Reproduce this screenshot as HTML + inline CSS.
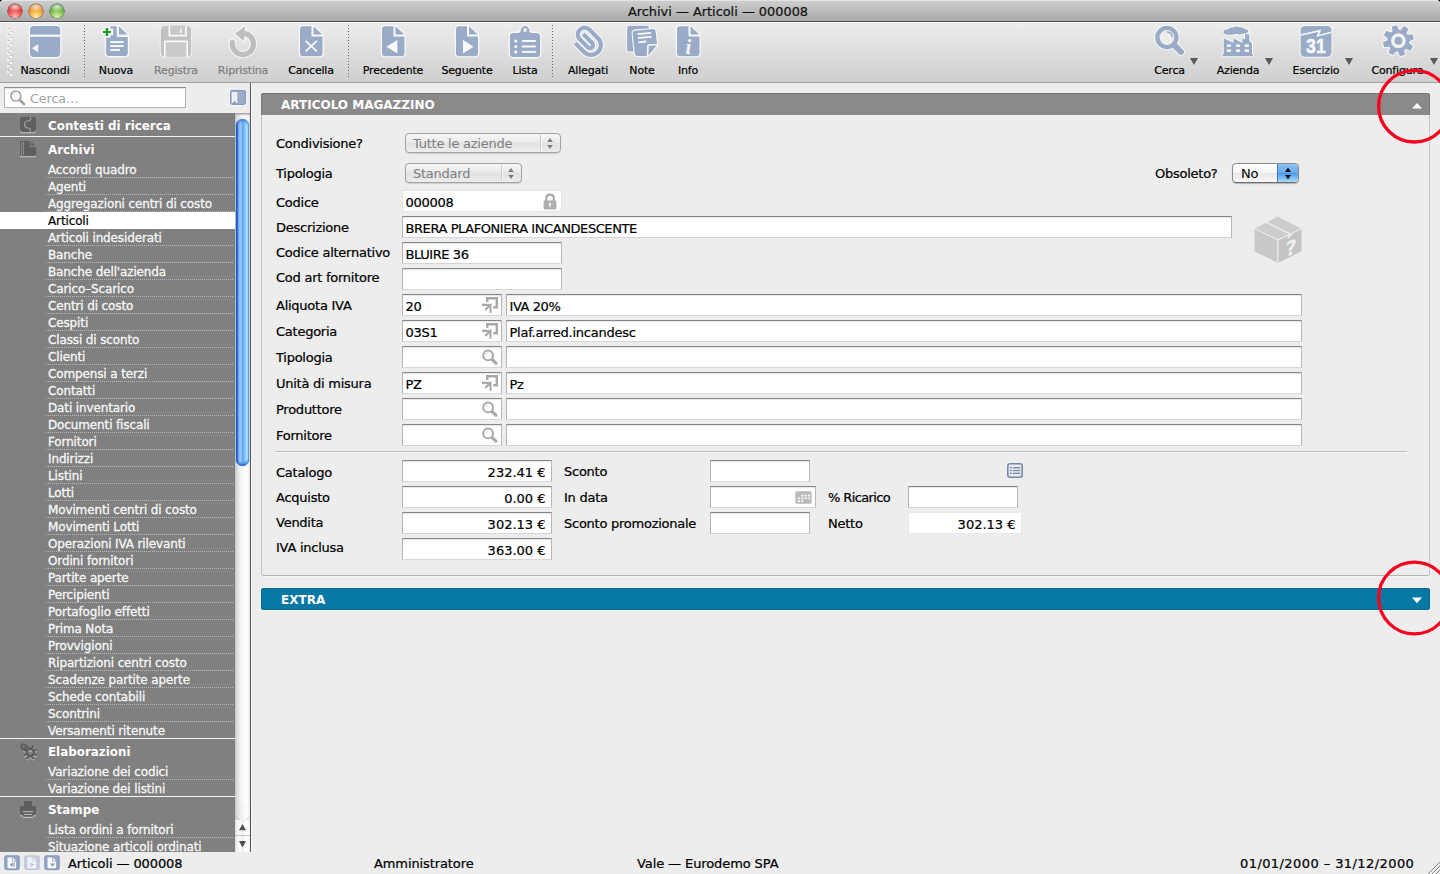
<!DOCTYPE html>
<html lang="it"><head><meta charset="utf-8"><title>Archivi — Articoli — 000008</title>
<style>
html,body{margin:0;padding:0;}
body{width:1440px;height:874px;overflow:hidden;background:#1a1a1a;font-family:"DejaVu Sans","Liberation Sans",sans-serif;color:#000;}
#win{position:relative;width:1440px;height:874px;overflow:hidden;background:#ededed;border-radius:4px 4px 0 0;}
#win *{box-sizing:border-box;}
.abs{position:absolute;}
/* title bar */
#title{position:absolute;left:0;top:0;width:1440px;height:22px;background:linear-gradient(#d0d0d0,#bebebe 45%,#a9a9a9);border-bottom:1px solid #515151;box-shadow:inset 0 1px 0 #e4e4e4;border-radius:4px 4px 0 0;}
#title .tt{-webkit-text-stroke:.22px #111;position:absolute;left:0;width:1436px;top:4px;text-align:center;font-size:12.9px;line-height:16px;color:#111;}
.tl{position:absolute;top:4px;width:14px;height:14px;border-radius:7px;}
/* toolbar */
#tb{position:absolute;left:0;top:22px;width:1440px;height:61px;background:linear-gradient(#ececec,#dedede 50%,#cfcfcf);border-bottom:1px solid #a3a3a3;box-shadow:inset 0 1px 0 #fbfbfb;}
.tbi{position:absolute;top:0;height:60px;width:80px;margin-left:-40px;text-align:center;}
.tbi svg{position:absolute;left:50%;top:2px;margin-left:-18px;}
.tbi .lb{-webkit-text-stroke:.2px currentColor;position:absolute;left:0;width:80px;top:42px;font-size:11px;letter-spacing:-.18px;line-height:14px;color:#000;white-space:nowrap;}
.tbi.dis .lb{color:#7d7d7d;}
.vsep{position:absolute;top:3px;height:54px;width:1px;background:repeating-linear-gradient(to bottom,#6e6e6e 0,#6e6e6e 1px,transparent 1px,transparent 3px);}
.dd{position:absolute;top:36px;width:0;height:0;border-left:4px solid transparent;border-right:4px solid transparent;border-top:7px solid #5a5a5a;}
/* sidebar */
#side{position:absolute;left:0;top:83px;width:251px;height:769px;background:#ededed;border-right:1px solid #565656;box-shadow:1px 0 0 #f7f7f7;}
#srch{position:absolute;left:4px;top:4px;width:182px;height:21px;background:#fff;border:1px solid #b5b5b5;border-top-color:#8c8c8c;box-shadow:inset 0 1px 1px rgba(0,0,0,.12);}
#srch .ph{position:absolute;left:25px;top:3px;font-size:12.6px;line-height:16px;color:#a3a3a3;}
#list{position:absolute;left:0;top:30px;width:236px;height:740px;background:#808080;overflow:hidden;}
.hdr{position:absolute;left:0;width:236px;}
.hdr .ht{position:absolute;left:48px;font-size:11.9px;font-weight:bold;line-height:16px;color:#fff;white-space:nowrap;}
.hdr .hic{position:absolute;left:20px;top:4px;width:18px;height:18px;}
.wl{position:absolute;left:0;width:236px;height:1px;background:#f4f4f4;}
.it{position:absolute;left:0;width:236px;height:17px;}
.it span{position:absolute;left:48px;top:1px;font-size:12px;letter-spacing:-.13px;line-height:16px;color:#f7f7f7;-webkit-text-stroke:.3px #f7f7f7;white-space:nowrap;}
.it:after{content:"";position:absolute;left:46px;width:188px;bottom:0;height:1px;background:repeating-linear-gradient(to right,#b9b9b9 0,#b9b9b9 1px,transparent 1px,transparent 2px);}
.it.nl:after{display:none;}
.it.sel{background:#fff;}
.it.sel span{color:#000;-webkit-text-stroke:.2px #000;}
/* main */
.phead{position:absolute;left:261px;width:1169px;height:23px;border-radius:3px 3px 0 0;}
.phead .t{position:absolute;left:20px;top:5px;font-size:12px;font-weight:bold;line-height:15px;color:#fff;white-space:nowrap;}
.lbl{position:absolute;-webkit-text-stroke:.22px #000;font-size:13px;letter-spacing:-.25px;line-height:16px;white-space:nowrap;color:#000;}
.fld{position:absolute;height:22px;background:#fff;border:1px solid #d6d6d6;border-top:1px solid #868686;border-left-color:#b2b2b2;border-right-color:#b8b8b8;box-shadow:inset 0 1px 1px rgba(0,0,0,.10);font-size:13px;letter-spacing:-.25px;line-height:16px;white-space:nowrap;}
.fld span{-webkit-text-stroke:.2px #000;}
.fld .uc{letter-spacing:-.42px;}
.fld .v{position:absolute;left:2.5px;top:4px;}
.fld .r{position:absolute;right:5.5px;top:4px;letter-spacing:0;}
.fld.nb{border-color:#fff;}
.pop{position:absolute;height:20px;border:1px solid #a3a3a3;border-radius:4px;background:linear-gradient(#f6f6f6,#e9e9e9 50%,#e2e2e2 51%,#ececec);font-size:13px;letter-spacing:-.25px;line-height:16px;color:#7e7e7e;box-shadow:0 1px 1px rgba(0,0,0,.13);}
.pop .v{position:absolute;left:7px;top:2px;white-space:nowrap;}
/* status */
#status{position:absolute;left:0;top:852px;width:1440px;height:22px;background:#ededed;}
#status .s{-webkit-text-stroke:.22px #000;position:absolute;top:4px;font-size:13px;letter-spacing:-.1px;line-height:16px;white-space:nowrap;color:#000;}

</style></head>
<body>
<div id="win">
<div id="title">
<div class="tl" style="left:8px;background:radial-gradient(ellipse 58% 34% at 50% 20%,rgba(255,255,255,.8),rgba(255,255,255,0) 100%),radial-gradient(circle at 50% 92%,#ffc4c0 0,#f4605c 38%,#cf2a25 72%,#8e1a17 100%);box-shadow:0 0 0 .6px #6b2320,0 1px 0 rgba(255,255,255,.35);"></div>
<div class="tl" style="left:29px;background:radial-gradient(ellipse 58% 34% at 50% 20%,rgba(255,255,255,.8),rgba(255,255,255,0) 100%),radial-gradient(circle at 50% 92%,#fff0a8 0,#f8b848 38%,#dd7f22 72%,#9a5413 100%);box-shadow:0 0 0 .6px #7a4c18,0 1px 0 rgba(255,255,255,.35);"></div>
<div class="tl" style="left:50px;background:radial-gradient(ellipse 58% 34% at 50% 20%,rgba(255,255,255,.8),rgba(255,255,255,0) 100%),radial-gradient(circle at 50% 92%,#dcf5ac 0,#92cc5e 38%,#509d35 72%,#2f6a1f 100%);box-shadow:0 0 0 .6px #2f5a20,0 1px 0 rgba(255,255,255,.35);"></div>
<div class="tt">Archivi — Articoli — 000008</div>
</div>
<div id="tb">
<svg class="abs" style="left:6px;top:6px" width="8" height="48" viewBox="0 0 8 48"><rect x="2" y="0" width="1.4" height="1.4" fill="#bdbdbd"/><rect x="1" y="1" width="2" height="2" fill="#f8f8f8"/><rect x="5" y="3" width="1.4" height="1.4" fill="#bdbdbd"/><rect x="4" y="4" width="2" height="2" fill="#f8f8f8"/><rect x="2" y="6" width="1.4" height="1.4" fill="#bdbdbd"/><rect x="1" y="7" width="2" height="2" fill="#f8f8f8"/><rect x="5" y="9" width="1.4" height="1.4" fill="#bdbdbd"/><rect x="4" y="10" width="2" height="2" fill="#f8f8f8"/><rect x="2" y="12" width="1.4" height="1.4" fill="#bdbdbd"/><rect x="1" y="13" width="2" height="2" fill="#f8f8f8"/><rect x="5" y="15" width="1.4" height="1.4" fill="#bdbdbd"/><rect x="4" y="16" width="2" height="2" fill="#f8f8f8"/><rect x="2" y="18" width="1.4" height="1.4" fill="#bdbdbd"/><rect x="1" y="19" width="2" height="2" fill="#f8f8f8"/><rect x="5" y="21" width="1.4" height="1.4" fill="#bdbdbd"/><rect x="4" y="22" width="2" height="2" fill="#f8f8f8"/><rect x="2" y="24" width="1.4" height="1.4" fill="#bdbdbd"/><rect x="1" y="25" width="2" height="2" fill="#f8f8f8"/><rect x="5" y="27" width="1.4" height="1.4" fill="#bdbdbd"/><rect x="4" y="28" width="2" height="2" fill="#f8f8f8"/><rect x="2" y="30" width="1.4" height="1.4" fill="#bdbdbd"/><rect x="1" y="31" width="2" height="2" fill="#f8f8f8"/><rect x="5" y="33" width="1.4" height="1.4" fill="#bdbdbd"/><rect x="4" y="34" width="2" height="2" fill="#f8f8f8"/><rect x="2" y="36" width="1.4" height="1.4" fill="#bdbdbd"/><rect x="1" y="37" width="2" height="2" fill="#f8f8f8"/><rect x="5" y="39" width="1.4" height="1.4" fill="#bdbdbd"/><rect x="4" y="40" width="2" height="2" fill="#f8f8f8"/><rect x="2" y="42" width="1.4" height="1.4" fill="#bdbdbd"/><rect x="1" y="43" width="2" height="2" fill="#f8f8f8"/><rect x="5" y="45" width="1.4" height="1.4" fill="#bdbdbd"/><rect x="4" y="46" width="2" height="2" fill="#f8f8f8"/></svg>
<div class="tbi" style="left:45px"><svg width="36" height="36" viewBox="0 0 36 36"><g fill="#f8f8f8" stroke="#f8f8f8" stroke-width="2.8" stroke-linejoin="round"><rect x="3" y="2" width="30.2" height="31" rx="4"/></g><g fill="#9aabc8"><rect x="3" y="2" width="30.2" height="31" rx="4"/></g><rect x="3" y="10.6" width="30.2" height="2.2" fill="#f8f8f8"/><path d="M5 24.2L11.2 20.2V28.2Z" fill="#f8f8f8"/></svg><div class="lb">Nascondi</div></div>
<div class="vsep" style="left:84px"></div>
<div class="tbi" style="left:116px"><svg width="36" height="36" viewBox="0 0 36 36"><g fill="#f8f8f8" stroke="#f8f8f8" stroke-width="2.6" stroke-linejoin="round"><path d="M12.2 2.3H18.8V12.9H29.8V29Q29.8 32.1 26.7 32.1H11.2Q8.1 32.1 8.1 29V13.8H12.6V11.3H15.2V4.4H12.2Z"/><path d="M20.9 2.3L29.7 10.5H20.9Z"/><path d="M7.8 3.9H10.1V6.9H12.9V9.1H10.1V12H7.8V9.1H4.9V6.9H7.8Z"/></g><g fill="#9aabc8"><path d="M12.2 2.3H18.8V12.9H29.8V29Q29.8 32.1 26.7 32.1H11.2Q8.1 32.1 8.1 29V13.8H12.6V11.3H15.2V4.4H12.2Z"/><path d="M20.9 2.3L29.7 10.5H20.9Z"/></g><g fill="#12a016"><path d="M7.8 3.9H10.1V6.9H12.9V9.1H10.1V12H7.8V9.1H4.9V6.9H7.8Z"/></g><g fill="#f8f8f8"><rect x="12.2" y="17.1" width="13.5" height="1.9"/><rect x="12.2" y="21.1" width="13.5" height="1.9"/><rect x="12.2" y="25.1" width="9.6" height="1.9"/></g></svg><div class="lb">Nuova</div></div>
<div class="tbi dis" style="left:176px"><svg width="36" height="36" viewBox="0 0 36 36"><g fill="#f8f8f8" stroke="#f8f8f8" stroke-width="1.8" stroke-linejoin="round"><rect x="2.7" y="1.8" width="30.5" height="31.2" rx="4.4"/></g><g fill="#c2c2c2"><rect x="2.7" y="1.8" width="30.5" height="31.2" rx="4.4"/></g><path d="M11.4 1.6V11.7H28V1.6" fill="#c8c8c8" stroke="#f8f8f8" stroke-width="1.7"/><rect x="22" y="4.6" width="1.6" height="4.6" rx=".8" fill="#f8f8f8"/><path d="M6.8 33.4V17.4H29.2V33.4" fill="#cbcbcb" stroke="#f8f8f8" stroke-width="1.7"/></svg><div class="lb">Registra</div></div>
<div class="tbi dis" style="left:243px"><svg width="36" height="36" viewBox="0 0 36 36"><g fill="none"><path d="M7.4 18.4A10.6 10.6 0 1 0 18.6 9.4" stroke="#f8f8f8" stroke-width="7.4" stroke-linecap="round"/></g><path d="M20.4 2L9.6 9.5L19 17.6Z" fill="#f8f8f8" stroke="#f8f8f8" stroke-width="2" stroke-linejoin="round"/><path d="M7.4 18.4A10.6 10.6 0 1 0 18.6 9.4" fill="none" stroke="#bebebe" stroke-width="5.4" stroke-linecap="round"/><path d="M20.2 2.3L10 9.5L18.8 17.2Z" fill="#bebebe"/></svg><div class="lb">Ripristina</div></div>
<div class="tbi" style="left:311px"><svg width="36" height="36" viewBox="0 0 36 36"><g fill="#f8f8f8" stroke="#f8f8f8" stroke-width="2.6" stroke-linejoin="round"><path d="M7 5.3Q7 2.2 10.1 2.2H18.5V12.6H29.5V29Q29.5 32.2 26.4 32.2H10.1Q7 32.2 7 29Z"/><path d="M20.5 2.3L29.3 10.6H20.5Z"/></g><g fill="#9aabc8"><path d="M7 5.3Q7 2.2 10.1 2.2H18.5V12.6H29.5V29Q29.5 32.2 26.4 32.2H10.1Q7 32.2 7 29Z"/><path d="M20.5 2.3L29.3 10.6H20.5Z"/></g><path d="M12.6 16.8L23.9 27.4M23.9 16.8L12.6 27.4" stroke="#f8f8f8" stroke-width="1.8" fill="none"/></svg><div class="lb">Cancella</div></div>
<div class="vsep" style="left:348px"></div>
<div class="tbi" style="left:393px"><svg width="36" height="36" viewBox="0 0 36 36"><g fill="#f8f8f8" stroke="#f8f8f8" stroke-width="2.6" stroke-linejoin="round"><path d="M7 5.3Q7 2.2 10.1 2.2H18.5V12.6H29.5V29Q29.5 32.2 26.4 32.2H10.1Q7 32.2 7 29Z"/><path d="M20.5 2.3L29.3 10.6H20.5Z"/></g><g fill="#9aabc8"><path d="M7 5.3Q7 2.2 10.1 2.2H18.5V12.6H29.5V29Q29.5 32.2 26.4 32.2H10.1Q7 32.2 7 29Z"/><path d="M20.5 2.3L29.3 10.6H20.5Z"/></g><path d="M11.4 22.7L22.4 16V29.4Z" fill="#f8f8f8"/></svg><div class="lb">Precedente</div></div>
<div class="tbi" style="left:467px"><svg width="36" height="36" viewBox="0 0 36 36"><g fill="#f8f8f8" stroke="#f8f8f8" stroke-width="2.6" stroke-linejoin="round"><path d="M7 5.3Q7 2.2 10.1 2.2H18V12.6H29V29Q29 32.2 25.9 32.2H10.1Q7 32.2 7 29Z"/><path d="M20 2.3L28.8 10.6H20Z"/></g><g fill="#9aabc8"><path d="M7 5.3Q7 2.2 10.1 2.2H18V12.6H29V29Q29 32.2 25.9 32.2H10.1Q7 32.2 7 29Z"/><path d="M20 2.3L28.8 10.6H20Z"/></g><path d="M24.6 22.7L14 16V29.4Z" fill="#f8f8f8"/></svg><div class="lb">Seguente</div></div>
<div class="tbi" style="left:525px"><svg width="36" height="36" viewBox="0 0 36 36"><g fill="#f8f8f8" stroke="#f8f8f8" stroke-width="2.8" stroke-linejoin="round"><rect x="2.9" y="8.9" width="30.2" height="24.1" rx="3.6"/><circle cx="18" cy="6.6" r="4.5"/><path d="M10.4 12L12.4 8.2H23.6L25.6 12Z"/></g><g fill="#9aabc8"><rect x="2.9" y="8.9" width="30.2" height="24.1" rx="3.6"/><circle cx="18" cy="6.6" r="4.5"/><path d="M10.4 12L12.4 8.2H23.6L25.6 12Z"/></g><circle cx="18" cy="6" r="1.9" fill="#f0f0f0"/><g fill="#f8f8f8"><circle cx="8.8" cy="17" r="1.6"/><circle cx="8.8" cy="22.5" r="1.6"/><circle cx="8.8" cy="27.9" r="1.6"/><rect x="14.8" y="16" width="14" height="2"/><rect x="14.8" y="21.5" width="14" height="2"/><rect x="14.8" y="26.9" width="14" height="2"/></g></svg><div class="lb">Lista</div></div>
<div class="vsep" style="left:552px"></div>
<div class="tbi" style="left:588px"><svg width="36" height="36" viewBox="0 0 36 36"><path d="M5.29 19.11L14.20 28.02A9.75 9.75 0 0 0 27.99 14.23L19.29 5.54A6.80 6.80 0 0 0 9.67 15.15L17.80 23.28A3.05 3.05 0 0 0 22.12 18.97L13.28 10.13" fill="none" stroke="#f8f8f8" stroke-width="6.2" stroke-linecap="butt" stroke-linejoin="round"/><path d="M5.29 19.11L14.20 28.02A9.75 9.75 0 0 0 27.99 14.23L19.29 5.54A6.80 6.80 0 0 0 9.67 15.15L17.80 23.28A3.05 3.05 0 0 0 22.12 18.97L13.28 10.13" fill="none" stroke="#9aabc8" stroke-width="4.2" stroke-linecap="butt" stroke-linejoin="round"/></svg><div class="lb">Allegati</div></div>
<div class="tbi" style="left:642px"><svg width="36" height="36" viewBox="0 0 36 36"><g fill="#f8f8f8" stroke="#f8f8f8" stroke-width="1.8" stroke-linejoin="round"><path d="M5.6 1.8H22.5Q25 1.8 25 4.4V27.5H5.6Q3.1 27.5 3.1 25V4.4Q3.1 1.8 5.6 1.8Z"/></g><g fill="#9aabc8"><path d="M5.6 1.8H22.5Q25 1.8 25 4.4V27.5H5.6Q3.1 27.5 3.1 25V4.4Q3.1 1.8 5.6 1.8Z"/></g><g fill="#f8f8f8" stroke="#f8f8f8" stroke-width="2.2" stroke-linejoin="round"><path d="M8.7 9.4Q8.5 7 11 6.7L29 5Q31.4 4.8 31.6 7.2L33.2 21L23.7 32.2L13.2 32Q10.9 32 10.7 29.6Z"/></g><g fill="#9aabc8"><path d="M8.7 9.4Q8.5 7 11 6.7L29 5Q31.4 4.8 31.6 7.2L33.2 21L23.7 32.2L13.2 32Q10.9 32 10.7 29.6Z"/></g><path d="M23.6 32.6L23.9 22.8Q24 20.6 26.2 20.7L33.6 21" fill="none" stroke="#f8f8f8" stroke-width="1.6" stroke-linejoin="round"/><g stroke="#f8f8f8" stroke-width="1.8" fill="none"><path d="M13.4 10.1L27 8.9M14 13.9L27.6 12.8M14.3 18.4L22.3 17.5"/></g></svg><div class="lb">Note</div></div>
<div class="tbi" style="left:688px"><svg width="36" height="36" viewBox="0 0 36 36"><g fill="#f8f8f8" stroke="#f8f8f8" stroke-width="2.6" stroke-linejoin="round"><path d="M7 5.3Q7 2.2 10.1 2.2H18.5V12.6H29.5V29Q29.5 32.2 26.4 32.2H10.1Q7 32.2 7 29Z"/><path d="M20.5 2.3L29.3 10.6H20.5Z"/></g><g fill="#9aabc8"><path d="M7 5.3Q7 2.2 10.1 2.2H18.5V12.6H29.5V29Q29.5 32.2 26.4 32.2H10.1Q7 32.2 7 29Z"/><path d="M20.5 2.3L29.3 10.6H20.5Z"/></g><text x="18.4" y="29.6" text-anchor="middle" font-family="Liberation Serif,DejaVu Serif,serif" font-style="italic" font-weight="bold" font-size="21" fill="#f8f8f8">i</text></svg><div class="lb">Info</div></div>
<div class="tbi" style="left:1169.5px"><svg width="36" height="36" viewBox="0 0 36 36"><g fill="none"><path d="M22.6 21.6L29 27.8" stroke="#f8f8f8" stroke-width="8" stroke-linecap="round"/><circle cx="14.9" cy="13.5" r="9.55" stroke="#f8f8f8" stroke-width="6.3"/><path d="M22.2 21.2L29 27.8" stroke="#9aabc8" stroke-width="6" stroke-linecap="round"/><circle cx="14.9" cy="13.5" r="9.55" stroke="#9aabc8" stroke-width="4.3" fill="#ececec"/><path d="M15.4 8A5.4 5.4 0 0 1 20.3 12.8" stroke="#9aabc8" stroke-width="1.4" stroke-linecap="round"/></g></svg><div class="lb">Cerca</div></div>
<div class="dd" style="left:1190px"></div>
<div class="tbi" style="left:1238px"><svg width="36" height="36" viewBox="0 0 36 36"><g fill="#f8f8f8" stroke="#f8f8f8" stroke-width="2" stroke-linejoin="round"><path d="M6.6 10.4Q2.8 10.2 3.3 7.6Q4 5.2 7.6 5.6Q9.4 2.9 13 3.6Q16 1.4 19.6 3.3Q23.6 2.6 24.6 4.9Q28.4 4.9 28.1 7.8Q27.4 10 23 9.6Q19.6 11.2 16.4 9.8Q11.6 11.4 6.6 10.4Z"/><path d="M3.7 30.5V14.2L13.5 19V14.2L22.3 19V14.2L25 15.6V10.2H29.3V16.4L32 19.4V30.5Z"/><rect x="2.6" y="30" width="30.4" height="2.2"/></g><g fill="#9aabc8"><path d="M6.6 10.4Q2.8 10.2 3.3 7.6Q4 5.2 7.6 5.6Q9.4 2.9 13 3.6Q16 1.4 19.6 3.3Q23.6 2.6 24.6 4.9Q28.4 4.9 28.1 7.8Q27.4 10 23 9.6Q19.6 11.2 16.4 9.8Q11.6 11.4 6.6 10.4Z"/><path d="M3.7 30.5V14.2L13.5 19V14.2L22.3 19V14.2L25 15.6V10.2H29.3V16.4L32 19.4V30.5Z"/><rect x="2.6" y="30" width="30.4" height="2.2"/></g><g fill="#f8f8f8"><rect x="6.8" y="20.4" width="4.2" height="2.5"/><rect x="15.9" y="20.4" width="4.2" height="2.5"/><rect x="24.7" y="20.4" width="4.2" height="2.5"/><rect x="6.8" y="25.4" width="4.2" height="2.5"/><rect x="15.9" y="25.4" width="4.2" height="2.5"/><rect x="24.7" y="25.4" width="4.2" height="2.5"/></g></svg><div class="lb">Azienda</div></div>
<div class="dd" style="left:1265px"></div>
<div class="tbi" style="left:1316px"><svg width="36" height="36" viewBox="0 0 36 36"><g fill="#f8f8f8" stroke="#f8f8f8" stroke-width="2" stroke-linejoin="round"><rect x="2.6" y="1.9" width="30.9" height="30.8" rx="4.2"/></g><g fill="#9aabc8"><rect x="2.6" y="1.9" width="30.9" height="30.8" rx="4.2"/></g><path d="M2.6 11L22 6.7L19.6 11.9L33.5 8.2" fill="none" stroke="#f8f8f8" stroke-width="1.6" stroke-linejoin="miter"/><text transform="translate(17.9 29.3) scale(.86 1)" text-anchor="middle" font-family="Liberation Sans,DejaVu Sans,sans-serif" font-weight="bold" font-size="20.6" fill="#f8f8f8" stroke="#f8f8f8" stroke-width=".5">31</text></svg><div class="lb">Esercizio</div></div>
<div class="dd" style="left:1345px"></div>
<div class="tbi" style="left:1397.5px"><svg width="36" height="36" viewBox="0 0 36 36"><g transform="translate(18.4 16.7)"><g fill="#f8f8f8" stroke="#f8f8f8" stroke-width="2" stroke-linejoin="round"><circle r="10.9"/><path d="M-3.4 -10L-2.6 -15.4H2.6L3.4 -10Z" transform="rotate(-15)"/><path d="M-3.4 -10L-2.6 -15.4H2.6L3.4 -10Z" transform="rotate(30)"/><path d="M-3.4 -10L-2.6 -15.4H2.6L3.4 -10Z" transform="rotate(75)"/><path d="M-3.4 -10L-2.6 -15.4H2.6L3.4 -10Z" transform="rotate(120)"/><path d="M-3.4 -10L-2.6 -15.4H2.6L3.4 -10Z" transform="rotate(165)"/><path d="M-3.4 -10L-2.6 -15.4H2.6L3.4 -10Z" transform="rotate(210)"/><path d="M-3.4 -10L-2.6 -15.4H2.6L3.4 -10Z" transform="rotate(255)"/><path d="M-3.4 -10L-2.6 -15.4H2.6L3.4 -10Z" transform="rotate(300)"/></g><g fill="#9aabc8"><circle r="10.9"/><path d="M-3.4 -10L-2.6 -15.4H2.6L3.4 -10Z" transform="rotate(-15)"/><path d="M-3.4 -10L-2.6 -15.4H2.6L3.4 -10Z" transform="rotate(30)"/><path d="M-3.4 -10L-2.6 -15.4H2.6L3.4 -10Z" transform="rotate(75)"/><path d="M-3.4 -10L-2.6 -15.4H2.6L3.4 -10Z" transform="rotate(120)"/><path d="M-3.4 -10L-2.6 -15.4H2.6L3.4 -10Z" transform="rotate(165)"/><path d="M-3.4 -10L-2.6 -15.4H2.6L3.4 -10Z" transform="rotate(210)"/><path d="M-3.4 -10L-2.6 -15.4H2.6L3.4 -10Z" transform="rotate(255)"/><path d="M-3.4 -10L-2.6 -15.4H2.6L3.4 -10Z" transform="rotate(300)"/></g><circle r="7.4" fill="#f3f3f3"/><circle r="3.9" fill="#9aabc8"/></g></svg><div class="lb">Configura</div></div>
<div class="dd" style="left:1430px"></div>
</div>
<div id="side">
<div id="srch"><svg class="abs" style="left:4px;top:1px" width="18" height="18" viewBox="0 0 18 18"><g fill="none" stroke-linecap="round"><path d="M10.4 10.6L15 15.2" stroke="#9b9b9b" stroke-width="2.6"/><circle cx="6.8" cy="7" r="5" stroke="#a6a6a6" stroke-width="1.7" fill="#fdfdfd"/><path d="M4 6Q4.6 4 6.8 3.8" stroke="#dcdcdc" stroke-width="1.2"/></g></svg><span class="ph">Cerca…</span></div>
<svg class="abs" style="left:229px;top:6px" width="18" height="18" viewBox="0 0 18 18"><rect x=".6" y="1.6" width="16.8" height="15.4" rx="2.8" fill="#fafafa"/><rect x="1" y=".9" width="16" height="15.1" rx="2.4" fill="#8496ba"/><rect x="2.1" y="1.9" width="13.8" height="13.1" rx="1.4" fill="#9aacca"/><rect x="2.1" y="1.9" width="6.6" height="13.1" fill="#8a9cbe"/><path d="M3 3.2H8V14.2L5.5 11.7L3 14.2Z" fill="#eeeeee" stroke="#fbfbfb" stroke-width=".7"/></svg>
<div id="list">
<div class="hdr" style="top:0;height:23px"><span class="hic"><svg width="18" height="18" viewBox="0 0 18 18"><path d="M0 11V13.6Q0 16.3 2.6 16.3H13.4Q16 16.3 16 13.6V11Z" fill="#cfcfcf"/><rect x="0" y="0" width="16" height="15.2" rx="2.6" fill="#5f5f5f"/><path d="M10.8 0.3Q11 3.2 9.6 3.8Q5 3.4 4.6 6.6Q4.4 10.2 6.6 11Q10.2 10.6 10.2 12.6L10 15" fill="none" stroke="#a0a0a0" stroke-width="1.2"/></svg>
</span><span class="ht" style="top:5px">Contesti di ricerca</span></div>
<div class="wl" style="top:23px"></div>
<div class="hdr" style="top:24px;height:24px"><span class="hic"><svg width="18" height="18" viewBox="0 0 18 18"><path d="M0 12V14.8Q0 16.3 1.5 16.3H14.5Q16 16.3 16 14.8V12Z" fill="#cfcfcf"/><path d="M1.2 0H10.2V5.8H16V13.8Q16 15.2 14.6 15.2H1.2Q0 15.2 0 13.8V1.2Q0 0 1.2 0Z" fill="#5f5f5f"/><path d="M10.9 .3L15.7 5.1H10.9Z" fill="#646464"/><path d="M10.55 0V5.45H16" fill="none" stroke="#8e8e8e" stroke-width=".7"/><path d="M1.6 .8V14.4M3.6 .8V14.4" stroke="#a2a2a2" stroke-width=".75" fill="none"/></svg>
</span><span class="ht" style="top:5px">Archivi</span></div>
<div class="it" style="top:48px"><span>Accordi quadro</span></div>
<div class="it" style="top:65px"><span>Agenti</span></div>
<div class="it" style="top:82px"><span>Aggregazioni centri di costo</span></div>
<div class="it sel nl" style="top:99px"><span>Articoli</span></div>
<div class="it" style="top:116px"><span>Articoli indesiderati</span></div>
<div class="it" style="top:133px"><span>Banche</span></div>
<div class="it" style="top:150px"><span>Banche dell'azienda</span></div>
<div class="it" style="top:167px"><span>Carico–Scarico</span></div>
<div class="it" style="top:184px"><span>Centri di costo</span></div>
<div class="it" style="top:201px"><span>Cespiti</span></div>
<div class="it" style="top:218px"><span>Classi di sconto</span></div>
<div class="it" style="top:235px"><span>Clienti</span></div>
<div class="it" style="top:252px"><span>Compensi a terzi</span></div>
<div class="it" style="top:269px"><span>Contatti</span></div>
<div class="it" style="top:286px"><span>Dati inventario</span></div>
<div class="it" style="top:303px"><span>Documenti fiscali</span></div>
<div class="it" style="top:320px"><span>Fornitori</span></div>
<div class="it" style="top:337px"><span>Indirizzi</span></div>
<div class="it" style="top:354px"><span>Listini</span></div>
<div class="it" style="top:371px"><span>Lotti</span></div>
<div class="it" style="top:388px"><span>Movimenti centri di costo</span></div>
<div class="it" style="top:405px"><span>Movimenti Lotti</span></div>
<div class="it" style="top:422px"><span>Operazioni IVA rilevanti</span></div>
<div class="it" style="top:439px"><span>Ordini fornitori</span></div>
<div class="it" style="top:456px"><span>Partite aperte</span></div>
<div class="it" style="top:473px"><span>Percipienti</span></div>
<div class="it" style="top:490px"><span>Portafoglio effetti</span></div>
<div class="it" style="top:507px"><span>Prima Nota</span></div>
<div class="it" style="top:524px"><span>Provvigioni</span></div>
<div class="it" style="top:541px"><span>Ripartizioni centri costo</span></div>
<div class="it" style="top:558px"><span>Scadenze partite aperte</span></div>
<div class="it" style="top:575px"><span>Schede contabili</span></div>
<div class="it" style="top:592px"><span>Scontrini</span></div>
<div class="it nl" style="top:609px"><span>Versamenti ritenute</span></div>
<div class="wl" style="top:625px"></div>
<div class="hdr" style="top:626px;height:24px"><span class="hic"><svg width="18" height="18" viewBox="0 0 18 18"><g transform="translate(0 1)"><circle cx="10.2" cy="9.6" r="3.6" fill="none" stroke="#c8c8c8" stroke-width="2.4"/><path d="M14.45 11.36L16.85 12.36" stroke="#c8c8c8" stroke-width="1.9" fill="none"/><path d="M11.96 13.85L12.96 16.25" stroke="#c8c8c8" stroke-width="1.9" fill="none"/><path d="M8.44 13.85L7.44 16.25" stroke="#c8c8c8" stroke-width="1.9" fill="none"/><path d="M5.95 11.36L3.55 12.36" stroke="#c8c8c8" stroke-width="1.9" fill="none"/><path d="M5.95 7.84L3.55 6.84" stroke="#c8c8c8" stroke-width="1.9" fill="none"/><path d="M8.44 5.35L7.44 2.95" stroke="#c8c8c8" stroke-width="1.9" fill="none"/><path d="M11.96 5.35L12.96 2.95" stroke="#c8c8c8" stroke-width="1.9" fill="none"/><path d="M14.45 7.84L16.85 6.84" stroke="#c8c8c8" stroke-width="1.9" fill="none"/></g><circle cx="3.8" cy="3.8" r="1.9" fill="none" stroke="#5a5a5a" stroke-width="1.4"/><path d="M6.20 3.80L7.80 3.80" stroke="#5a5a5a" stroke-width="1.3" fill="none"/><path d="M5.50 5.50L6.63 6.63" stroke="#5a5a5a" stroke-width="1.3" fill="none"/><path d="M3.80 6.20L3.80 7.80" stroke="#5a5a5a" stroke-width="1.3" fill="none"/><path d="M2.10 5.50L0.97 6.63" stroke="#5a5a5a" stroke-width="1.3" fill="none"/><path d="M1.40 3.80L-0.20 3.80" stroke="#5a5a5a" stroke-width="1.3" fill="none"/><path d="M2.10 2.10L0.97 0.97" stroke="#5a5a5a" stroke-width="1.3" fill="none"/><path d="M3.80 1.40L3.80 -0.20" stroke="#5a5a5a" stroke-width="1.3" fill="none"/><path d="M5.50 2.10L6.63 0.97" stroke="#5a5a5a" stroke-width="1.3" fill="none"/><circle cx="10.2" cy="9.6" r="3.6" fill="none" stroke="#5a5a5a" stroke-width="2.4"/><path d="M14.45 11.36L16.85 12.36" stroke="#5a5a5a" stroke-width="1.9" fill="none"/><path d="M11.96 13.85L12.96 16.25" stroke="#5a5a5a" stroke-width="1.9" fill="none"/><path d="M8.44 13.85L7.44 16.25" stroke="#5a5a5a" stroke-width="1.9" fill="none"/><path d="M5.95 11.36L3.55 12.36" stroke="#5a5a5a" stroke-width="1.9" fill="none"/><path d="M5.95 7.84L3.55 6.84" stroke="#5a5a5a" stroke-width="1.9" fill="none"/><path d="M8.44 5.35L7.44 2.95" stroke="#5a5a5a" stroke-width="1.9" fill="none"/><path d="M11.96 5.35L12.96 2.95" stroke="#5a5a5a" stroke-width="1.9" fill="none"/><path d="M14.45 7.84L16.85 6.84" stroke="#5a5a5a" stroke-width="1.9" fill="none"/></svg>
</span><span class="ht" style="top:5px">Elaborazioni</span></div>
<div class="it" style="top:650px"><span>Variazione dei codici</span></div>
<div class="it nl" style="top:667px"><span>Variazione dei listini</span></div>
<div class="wl" style="top:683px"></div>
<div class="hdr" style="top:684px;height:24px"><span class="hic"><svg width="18" height="18" viewBox="0 0 18 18"><rect x="0" y="6" width="16" height="9.6" rx="1.6" fill="#cfcfcf"/><rect x="0" y="5" width="16" height="9.6" rx="1.6" fill="#5f5f5f"/><rect x="4" y="0" width="8" height="5.5" fill="#5f5f5f"/><rect x="3" y="10.2" width="10" height="6.6" fill="#d4d4d4"/><rect x="3" y="10.2" width="10" height="5.6" fill="#5f5f5f"/><rect x="3" y="10.2" width="10" height="1" fill="#bdbdbd"/><rect x="4" y="13" width="8" height="1" fill="#bdbdbd"/></svg>
</span><span class="ht" style="top:5px">Stampe</span></div>
<div class="it" style="top:708px"><span>Lista ordini a fornitori</span></div>
<div class="it nl" style="top:725px"><span>Situazione articoli ordinati</span></div>
</div>
<div class="abs" style="left:235px;top:30px;width:15px;height:739px;background:linear-gradient(to right,#c2c2c2 0,#dedede 2px,#f4f4f4 6px,#fdfdfd 10px,#fbfbfb 13px,#e0e0e0 15px);">
<div class="abs" style="left:0;top:0;width:15px;height:3px;background:linear-gradient(#9c9c9c,rgba(200,200,200,0));"></div>
<div class="abs" style="left:1px;top:6px;width:13px;height:347px;border-radius:6.5px;background:linear-gradient(to right,#1148b8 0,#2f72d9 1.5px,#8fbdf2 3px,#9cc7f5 5px,#62a9ee 6.5px,#7fc2f6 9px,#b4ecff 11px,#8fd0fa 12px,#4a8de0 13px);box-shadow:0 0 1px rgba(20,40,110,.9), inset 0 -3px 3px -1px #1c63cf, inset 0 3px 3px -1px #3d7fe0;"></div>
<div class="abs" style="left:0;top:690px;width:15px;height:17px;border-radius:0 0 7.5px 7.5px;background:linear-gradient(to right,#c9c9c9 0,#e2e2e2 3px,#f6f6f6 8px,#fdfdfd 12px,#ececec 15px);box-shadow:0 1px 1px rgba(0,0,0,.18);"></div>
<div class="abs" style="left:0;top:707px;width:15px;height:32px;background:linear-gradient(to right,#dcdcdc 0,#f3f3f3 2px,#fcfcfc 6px,#ececec 7.5px,#fafafa 9px,#fdfdfd 13px,#eaeaea 15px);"></div>
<div class="abs" style="left:0;top:722px;width:15px;height:1px;background:#c4c4c4;"></div>
<svg class="abs" style="left:0;top:707px" width="15" height="32" viewBox="0 0 15 32"><path d="M7.5 4L11 10.2H4Z" fill="#4f4f4f"/><path d="M7.5 27.4L11 21H4Z" fill="#4f4f4f"/></svg>
</div>
</div>
<div id="main">
<div class="abs" style="left:261px;top:115px;width:1169px;height:461px;border:1px solid #c6c6c6;border-bottom-color:#b4b4b4;border-top:none;border-radius:0 0 3px 3px;box-shadow:0 1px 0 #f6f6f6;background:#ededed;"></div>
<div class="phead" style="top:93px;height:22px;background:#8a8a8a;box-shadow:inset 0 1px 0 #747474,inset 1px 0 0 #7a7a7a,inset -1px 0 0 #7a7a7a,0 -1px 0 #f4f4f4;"><span class="t">ARTICOLO MAGAZZINO</span><svg class="abs" style="left:1150px;top:9px" width="12" height="7" viewBox="0 0 12 7"><path d="M6 1L11 6.4H1Z" fill="#fff"/></svg></div>
<div class="lbl" style="left:276px;top:136px">Condivisione?</div>
<div class="pop" style="left:405px;top:133px;width:156px"><span class="v">Tutte le aziende</span><i class="abs" style="right:18px;top:1px;width:1px;height:16px;background:#c9c9c9;border-right:1px solid #f8f8f8;box-sizing:content-box"></i><svg class="abs" style="right:6px;top:3px" width="8" height="13" viewBox="0 0 8 13"><path d="M4 1L6.8 5H1.2Z" fill="#7a7a7a"/><path d="M4 12L6.8 8H1.2Z" fill="#7a7a7a"/></svg></div>
<div class="lbl" style="left:276px;top:166px">Tipologia</div>
<div class="pop" style="left:405px;top:163px;width:117px"><span class="v">Standard</span><i class="abs" style="right:18px;top:1px;width:1px;height:16px;background:#c9c9c9;border-right:1px solid #f8f8f8;box-sizing:content-box"></i><svg class="abs" style="right:6px;top:3px" width="8" height="13" viewBox="0 0 8 13"><path d="M4 1L6.8 5H1.2Z" fill="#7a7a7a"/><path d="M4 12L6.8 8H1.2Z" fill="#7a7a7a"/></svg></div>
<div class="lbl" style="left:1155px;top:166px">Obsoleto?</div>
<div class="abs" style="left:1232px;top:163px;width:67px;height:20px;border:1px solid #8b8b8b;border-bottom-color:#6e6e6e;border-radius:4.5px;background:linear-gradient(#fff,#f4f4f4 48%,#e8e8e8 52%,#f7f7f7);box-shadow:0 1px 1px rgba(0,0,0,.25);font-size:13px;letter-spacing:-.25px;line-height:16px;overflow:hidden;"><span class="abs" style="left:8px;top:2px">No</span><div class="abs" style="right:0;top:0;width:21px;height:18px;background:linear-gradient(#8fc1f2,#66a9ec 48%,#4c9ae8 52%,#a8dcfb);border-left:1px solid #4a74c4;"></div><svg class="abs" style="right:6px;top:3px" width="8" height="13" viewBox="0 0 8 13"><path d="M4 .6L7 5H1Z" fill="#111"/><path d="M4 12.4L7 8H1Z" fill="#111"/></svg></div>
<div class="lbl" style="left:276px;top:195px">Codice</div>
<div class="fld" style="left:402px;top:190px;width:160px;height:22px;border-color:#e3e3e3;box-shadow:none"><span class="v">000008</span><svg class="abs" style="right:3px;top:2px" width="16" height="17" viewBox="0 0 16 17"><path d="M4.2 8V5.4Q4.2 1.6 8 1.6Q11.8 1.6 11.8 5.4V8" fill="none" stroke="#a9a9a9" stroke-width="2.2"/><rect x="1.6" y="7.4" width="12.8" height="9" rx="1.4" fill="#aeaeae"/><circle cx="8" cy="11" r="1.3" fill="#f1f1f1"/><rect x="7.3" y="11.4" width="1.4" height="3" fill="#f1f1f1"/></svg></div>
<div class="lbl" style="left:276px;top:220px">Descrizione</div>
<div class="fld" style="left:402px;top:216px;width:830px;height:22px"><span class="v uc">BRERA PLAFONIERA INCANDESCENTE</span></div>
<div class="lbl" style="left:276px;top:245px">Codice alternativo</div>
<div class="fld" style="left:402px;top:242px;width:160px;height:22px"><span class="v uc">BLUIRE 36</span></div>
<div class="lbl" style="left:276px;top:270px">Cod art fornitore</div>
<div class="fld" style="left:402px;top:268px;width:160px;height:22px"></div>
<div class="lbl" style="left:276px;top:298px">Aliquota IVA</div>
<div class="fld" style="left:402px;top:294px;width:100px;height:22px"><span class="v">20</span><svg class="abs" style="right:2px;top:2px" width="17" height="17" viewBox="0 0 17 17"><g fill="none" stroke="#a9a9a9"><path d="M5.2 5V1.2H14.8V10.2H11.2" stroke-width="2.4"/><path d="M0 7.9H9.6M8.5 7V15.8M3.2 13L8.4 7.8" stroke-width="2.1"/></g></svg></div>
<div class="fld" style="left:506px;top:294px;width:796px;height:22px"><span class="v uc">IVA 20%</span></div>
<div class="lbl" style="left:276px;top:324px">Categoria</div>
<div class="fld" style="left:402px;top:320px;width:100px;height:22px"><span class="v">03S1</span><svg class="abs" style="right:2px;top:2px" width="17" height="17" viewBox="0 0 17 17"><g fill="none" stroke="#a9a9a9"><path d="M5.2 5V1.2H14.8V10.2H11.2" stroke-width="2.4"/><path d="M0 7.9H9.6M8.5 7V15.8M3.2 13L8.4 7.8" stroke-width="2.1"/></g></svg></div>
<div class="fld" style="left:506px;top:320px;width:796px;height:22px"><span class="v">Plaf.arred.incandesc</span></div>
<div class="lbl" style="left:276px;top:350px">Tipologia</div>
<div class="fld" style="left:402px;top:346px;width:100px;height:22px"><svg class="abs" style="right:2px;top:2px" width="17" height="17" viewBox="0 0 17 17"><g fill="none"><path d="M10.2 10.6L13.9 14.1" stroke="#a9a9a9" stroke-width="3.3" stroke-linecap="round"/><circle cx="6.1" cy="6.4" r="4.9" stroke="#a9a9a9" stroke-width="2" fill="#fdfdfd"/><path d="M3.6 5.6Q4.2 4 6.2 3.8" stroke="#e0e0e0" stroke-width="1.1"/></g></svg></div>
<div class="fld" style="left:506px;top:346px;width:796px;height:22px"></div>
<div class="lbl" style="left:276px;top:376px">Unità di misura</div>
<div class="fld" style="left:402px;top:372px;width:100px;height:22px"><span class="v">PZ</span><svg class="abs" style="right:2px;top:2px" width="17" height="17" viewBox="0 0 17 17"><g fill="none" stroke="#a9a9a9"><path d="M5.2 5V1.2H14.8V10.2H11.2" stroke-width="2.4"/><path d="M0 7.9H9.6M8.5 7V15.8M3.2 13L8.4 7.8" stroke-width="2.1"/></g></svg></div>
<div class="fld" style="left:506px;top:372px;width:796px;height:22px"><span class="v">Pz</span></div>
<div class="lbl" style="left:276px;top:402px">Produttore</div>
<div class="fld" style="left:402px;top:398px;width:100px;height:22px"><svg class="abs" style="right:2px;top:2px" width="17" height="17" viewBox="0 0 17 17"><g fill="none"><path d="M10.2 10.6L13.9 14.1" stroke="#a9a9a9" stroke-width="3.3" stroke-linecap="round"/><circle cx="6.1" cy="6.4" r="4.9" stroke="#a9a9a9" stroke-width="2" fill="#fdfdfd"/><path d="M3.6 5.6Q4.2 4 6.2 3.8" stroke="#e0e0e0" stroke-width="1.1"/></g></svg></div>
<div class="fld" style="left:506px;top:398px;width:796px;height:22px"></div>
<div class="lbl" style="left:276px;top:428px">Fornitore</div>
<div class="fld" style="left:402px;top:424px;width:100px;height:22px"><svg class="abs" style="right:2px;top:2px" width="17" height="17" viewBox="0 0 17 17"><g fill="none"><path d="M10.2 10.6L13.9 14.1" stroke="#a9a9a9" stroke-width="3.3" stroke-linecap="round"/><circle cx="6.1" cy="6.4" r="4.9" stroke="#a9a9a9" stroke-width="2" fill="#fdfdfd"/><path d="M3.6 5.6Q4.2 4 6.2 3.8" stroke="#e0e0e0" stroke-width="1.1"/></g></svg></div>
<div class="fld" style="left:506px;top:424px;width:796px;height:22px"></div>
<div class="abs" style="left:276px;top:451px;width:1131px;height:2px;background:linear-gradient(#bdbdbd 50%,#f8f8f8 50%)"></div>
<div class="lbl" style="left:276px;top:465px">Catalogo</div>
<div class="fld" style="left:402px;top:460px;width:150px;height:22px"><span class="r">232.41 €</span></div>
<div class="lbl" style="left:276px;top:490px">Acquisto</div>
<div class="fld" style="left:402px;top:486px;width:150px;height:22px"><span class="r">0.00 €</span></div>
<div class="lbl" style="left:276px;top:515px">Vendita</div>
<div class="fld" style="left:402px;top:512px;width:150px;height:22px"><span class="r">302.13 €</span></div>
<div class="lbl" style="left:276px;top:540px">IVA inclusa</div>
<div class="fld" style="left:402px;top:538px;width:150px;height:22px"><span class="r">363.00 €</span></div>
<div class="lbl" style="left:564px;top:464px">Sconto</div>
<div class="fld" style="left:710px;top:460px;width:100px;height:22px"></div>
<div class="lbl" style="left:564px;top:490px">In data</div>
<div class="fld" style="left:710px;top:486px;width:106px;height:22px"><svg class="abs" style="right:3px;top:4px" width="17" height="13" viewBox="0 0 17 13"><rect x=".3" y=".3" width="16.4" height="12.4" rx="1.6" fill="#b9b9b9"/><g fill="#f3f3f3"><rect x="6" y="3.6" width="2.4" height="1.8"/><rect x="9.4" y="3.6" width="2.4" height="1.8"/><rect x="12.8" y="3.6" width="2.4" height="1.8"/><rect x="2.6" y="6.4" width="2.4" height="1.8"/><rect x="6" y="6.4" width="2.4" height="1.8"/><rect x="9.4" y="6.4" width="2.4" height="1.8"/><rect x="12.8" y="6.4" width="2.4" height="1.8"/><rect x="2.6" y="9.2" width="2.4" height="1.8"/><rect x="6" y="9.2" width="2.4" height="1.8"/></g></svg></div>
<div class="lbl" style="left:564px;top:516px">Sconto promozionale</div>
<div class="fld" style="left:710px;top:512px;width:100px;height:22px"></div>
<div class="lbl" style="left:828px;top:490px"><span style="letter-spacing:-.62px">% Ricarico</span></div>
<div class="fld" style="left:908px;top:486px;width:110px;height:22px"></div>
<div class="lbl" style="left:828px;top:516px">Netto</div>
<div class="fld" style="left:908px;top:512px;width:114px;height:22px;border-color:#e9e9e9;box-shadow:none"><span class="r">302.13 €</span></div>
<svg class="abs" style="left:1006px;top:462px" width="18" height="17" viewBox="0 0 18 17"><rect x="1.8" y="1.7" width="14.4" height="13.6" rx="2.2" fill="#e9ebf0" stroke="#7888aa" stroke-width="1.6"/><g fill="#7d8db0"><rect x="3.8" y="5" width="2" height="1.4"/><rect x="6.8" y="5" width="7.4" height="1.4"/><rect x="3.8" y="7.8" width="2" height="1.4"/><rect x="6.8" y="7.8" width="7.4" height="1.4"/><rect x="3.8" y="10.6" width="2" height="1.4"/><rect x="6.8" y="10.6" width="7.4" height="1.4"/></g></svg>
<svg class="abs" style="left:1252px;top:214px" width="52" height="52" viewBox="0 0 52 52"><g stroke="#ededed" stroke-width="1" stroke-linejoin="round"><path d="M2 14.5L25.5 2L50 14.5L26 26Z" fill="#cdcdcd"/><path d="M2 14.5L26 26V49.5L2 37.6Z" fill="#c9c9c9"/><path d="M50 14.5L26 26V49.5L50 37.6Z" fill="#c4c4c4"/><path d="M14 8.2L38.5 20.2L36 24L40.5 19.2" fill="none" stroke-width="1.4"/></g><text x="39" y="41" text-anchor="middle" font-family="DejaVu Sans,Liberation Sans,sans-serif" font-weight="bold" font-size="20" fill="#efefef" transform="skewY(-26) translate(0 19)">?</text></svg>
<div class="phead" style="top:588px;height:22px;background:#0878a4;border-radius:3px;box-shadow:inset 0 0 0 1px #056a92,0 -1px 0 #f6f6f6,0 1px 0 #f4f4f4;"><span class="t" style="font-size:12px">EXTRA</span><svg class="abs" style="left:1150px;top:9px" width="12" height="7" viewBox="0 0 12 7"><path d="M6 6.2L11 .6H1Z" fill="#fff"/></svg></div>
<svg class="abs" style="left:1370px;top:60px;pointer-events:none" width="70" height="90" viewBox="0 0 70 90"><circle cx="44.4" cy="46.2" r="35.8" fill="none" stroke="#f6031f" stroke-width="3.3"/></svg>
<svg class="abs" style="left:1370px;top:551px;pointer-events:none" width="70" height="90" viewBox="0 0 70 90"><circle cx="44.4" cy="47" r="35.8" fill="none" stroke="#f6031f" stroke-width="3.3"/></svg>
</div>
<div id="status">
<svg class="abs" style="left:4px;top:3px" width="16" height="17" viewBox="0 0 16 17"><rect x="0" y="1" width="16" height="15.6" rx="2.6" fill="#f7f7f7"/><rect x=".2" y=".2" width="15.6" height="15" rx="2.4" fill="#8397bb"/><rect x="1.6" y="1.4" width="12.8" height="12.6" rx="1.6" fill="#97a8c6"/><path d="M3.6 2.6H8.6L12 6V13.2H3.6Z" fill="#fbfcfd"/><path d="M8.4 2.4V6.2H12.2" fill="none" stroke="#97a8c6" stroke-width=".9"/><path d="M5.6 9.6L8.8 7.2V12Z" fill="#8397bb"/><rect x="9.6" y="7.4" width="1" height="4.6" fill="#8397bb"/></svg>
<svg class="abs" style="left:24px;top:3px" width="16" height="17" viewBox="0 0 16 17"><rect x="0" y="1" width="16" height="15.6" rx="2.6" fill="#f5f5f5"/><rect x=".2" y=".2" width="15.6" height="15" rx="2.4" fill="#bcc6d8"/><rect x="1.6" y="1.4" width="12.8" height="12.6" rx="1.6" fill="#c9d1e0"/><path d="M3.6 2.6H8.6L12 6V13.2H3.6Z" fill="#f6f7fa"/><path d="M8.4 2.4V6.2H12.2" fill="none" stroke="#c9d1e0" stroke-width=".9"/><path d="M10.4 9.6L7.2 7.2V12Z" fill="#bcc6d8"/><rect x="5.4" y="7.4" width="1" height="4.6" fill="#c9d1e0"/></svg>
<svg class="abs" style="left:44px;top:3px" width="16" height="17" viewBox="0 0 16 17"><rect x="0" y="1" width="16" height="15.6" rx="2.6" fill="#f7f7f7"/><rect x=".2" y=".2" width="15.6" height="15" rx="2.4" fill="#8397bb"/><rect x="1.6" y="1.4" width="12.8" height="12.6" rx="1.6" fill="#97a8c6"/><path d="M3.6 2.6H8.6L12 6V13.2H3.6Z" fill="#fbfcfd"/><path d="M8.4 2.4V6.2H12.2" fill="none" stroke="#97a8c6" stroke-width=".9"/><path d="M8.6 11.4L6 8.4H11.2Z" fill="#8397bb"/></svg>
<span class="s" style="left:68px">Articoli — 000008</span>
<span class="s" style="left:374px">Amministratore</span>
<span class="s" style="left:637px">Vale — Eurodemo SPA</span>
<span class="s" style="left:1240px;letter-spacing:.42px">01/01/2000 – 31/12/2000</span>
<svg class="abs" style="left:1427px;top:9px" width="13" height="13" viewBox="0 0 13 13"><g stroke="#7e7e7e" stroke-width="1" fill="none"><path d="M1 13L13 1M5 13L13 5M9 13L13 9"/></g><g stroke="#fafafa" stroke-width="1" fill="none"><path d="M2.2 13L13 2.2M6.2 13L13 6.2M10.2 13L13 10.2"/></g></svg>
</div>
</div>
</body></html>
